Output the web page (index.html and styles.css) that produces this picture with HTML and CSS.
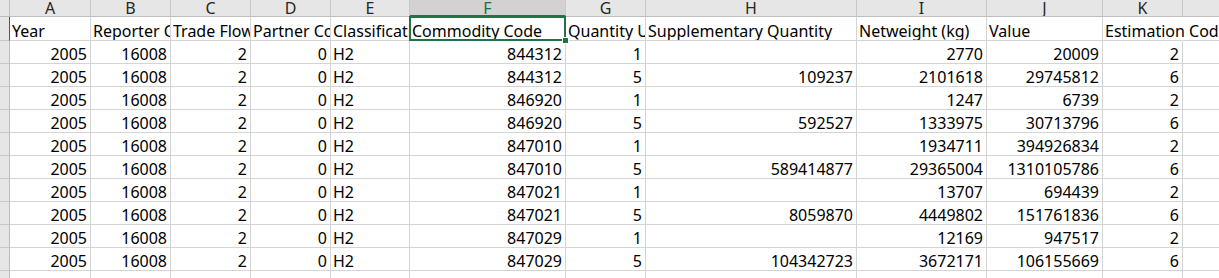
FILE: index.html
```html
<!DOCTYPE html>
<html>
<head>
<meta charset="utf-8">
<link rel="stylesheet" href="styles.css">
</head>
<body>
<div class="sheet">
  <div class="corner"></div>
  <div class="ch">A</div><div class="ch">B</div><div class="ch">C</div><div class="ch">D</div><div class="ch">E</div><div class="ch ch-sel">F</div><div class="ch">G</div><div class="ch">H</div><div class="ch">I</div><div class="ch">J</div><div class="ch">K</div><div class="ch ch-last"></div>

  <div class="rh rh-sel"><span class="rn">1</span></div>
  <div class="c">Year</div><div class="c">Reporter Code</div><div class="c">Trade Flow</div><div class="c">Partner Code</div><div class="c">Classification</div><div class="c active">Commodity Code<span class="handle"></span></div><div class="c">Quantity Unit</div><div class="c">Supplementary Quantity</div><div class="c">Netweight (kg)</div><div class="c">Value</div><div class="c spill">Estimation Code</div><div class="c last"></div>

  <div class="rh"><span class="rn">2</span></div>
  <div class="c n">2005</div><div class="c n">16008</div><div class="c n">2</div><div class="c n">0</div><div class="c">H2</div><div class="c n">844312</div><div class="c n">1</div><div class="c n"></div><div class="c n">2770</div><div class="c n">20009</div><div class="c n">2</div><div class="c last"></div>

  <div class="rh"><span class="rn">3</span></div>
  <div class="c n">2005</div><div class="c n">16008</div><div class="c n">2</div><div class="c n">0</div><div class="c">H2</div><div class="c n">844312</div><div class="c n">5</div><div class="c n">109237</div><div class="c n">2101618</div><div class="c n">29745812</div><div class="c n">6</div><div class="c last"></div>

  <div class="rh"><span class="rn">4</span></div>
  <div class="c n">2005</div><div class="c n">16008</div><div class="c n">2</div><div class="c n">0</div><div class="c">H2</div><div class="c n">846920</div><div class="c n">1</div><div class="c n"></div><div class="c n">1247</div><div class="c n">6739</div><div class="c n">2</div><div class="c last"></div>

  <div class="rh"><span class="rn">5</span></div>
  <div class="c n">2005</div><div class="c n">16008</div><div class="c n">2</div><div class="c n">0</div><div class="c">H2</div><div class="c n">846920</div><div class="c n">5</div><div class="c n">592527</div><div class="c n">1333975</div><div class="c n">30713796</div><div class="c n">6</div><div class="c last"></div>

  <div class="rh"><span class="rn">6</span></div>
  <div class="c n">2005</div><div class="c n">16008</div><div class="c n">2</div><div class="c n">0</div><div class="c">H2</div><div class="c n">847010</div><div class="c n">1</div><div class="c n"></div><div class="c n">1934711</div><div class="c n">394926834</div><div class="c n">2</div><div class="c last"></div>

  <div class="rh"><span class="rn">7</span></div>
  <div class="c n">2005</div><div class="c n">16008</div><div class="c n">2</div><div class="c n">0</div><div class="c">H2</div><div class="c n">847010</div><div class="c n">5</div><div class="c n">589414877</div><div class="c n">29365004</div><div class="c n">1310105786</div><div class="c n">6</div><div class="c last"></div>

  <div class="rh"><span class="rn">8</span></div>
  <div class="c n">2005</div><div class="c n">16008</div><div class="c n">2</div><div class="c n">0</div><div class="c">H2</div><div class="c n">847021</div><div class="c n">1</div><div class="c n"></div><div class="c n">13707</div><div class="c n">694439</div><div class="c n">2</div><div class="c last"></div>

  <div class="rh"><span class="rn">9</span></div>
  <div class="c n">2005</div><div class="c n">16008</div><div class="c n">2</div><div class="c n">0</div><div class="c">H2</div><div class="c n">847021</div><div class="c n">5</div><div class="c n">8059870</div><div class="c n">4449802</div><div class="c n">151761836</div><div class="c n">6</div><div class="c last"></div>

  <div class="rh"><span class="rn">10</span></div>
  <div class="c n">2005</div><div class="c n">16008</div><div class="c n">2</div><div class="c n">0</div><div class="c">H2</div><div class="c n">847029</div><div class="c n">1</div><div class="c n"></div><div class="c n">12169</div><div class="c n">947517</div><div class="c n">2</div><div class="c last"></div>

  <div class="rh"><span class="rn">11</span></div>
  <div class="c n">2005</div><div class="c n">16008</div><div class="c n">2</div><div class="c n">0</div><div class="c">H2</div><div class="c n">847029</div><div class="c n">5</div><div class="c n">104342723</div><div class="c n">3672171</div><div class="c n">106155669</div><div class="c n">6</div><div class="c last"></div>

  <div class="rh"><span class="rn">12</span></div>
  <div class="c n">2005</div><div class="c n">16008</div><div class="c n">2</div><div class="c n">0</div><div class="c">H2</div><div class="c n">847030</div><div class="c n">1</div><div class="c n"></div><div class="c n">28057</div><div class="c n">2766330</div><div class="c n">2</div><div class="c last"></div>
</div>
</body>
</html>
```

FILE: styles.css
```css
html, body {
  margin: 0;
  padding: 0;
  background: #ffffff;
}

body {
  width: 1219px;
  height: 278px;
  overflow: hidden;
  font-family: "Noto Sans", "Liberation Sans", sans-serif;
  font-size: 16px;
  color: #000000;
}

.sheet {
  display: grid;
  grid-template-columns: 10px 81px 80px 80px 80px 79px 156px 80px 211px 130px 116px 80px 1fr;
  grid-template-rows: 17px 24px;
  grid-auto-rows: 23px;
  width: 1219px;
}

.corner {
  background: #e6e6e6;
  border-right: 1px solid #bdbdbd;
  border-bottom: 1px solid #bdbdbd;
  box-sizing: border-box;
}

.ch {
  background: #e6e6e6;
  border-right: 1px solid #c8c8c8;
  border-bottom: 1px solid #bdbdbd;
  box-sizing: border-box;
  display: flex;
  align-items: center;
  justify-content: center;
  font-size: 16px;
  line-height: 16px;
  color: #262626;
  overflow: hidden;
}

.ch-sel {
  background: #d2d2d2;
  color: #1e6b41;
  border-bottom: 2px solid #217346;
}

.ch-last {
  border-right: none;
}

.rh {
  background: #e6e6e6;
  border-right: 1px solid #bdbdbd;
  border-bottom: 1px solid #c8c8c8;
  box-sizing: border-box;
  overflow: hidden;
  display: flex;
  align-items: center;
  justify-content: flex-end;
}

.rh-sel {
  border-right: 1px solid #217346;
}

.rn {
  flex: none;
  width: 32px;
  margin-right: -23px;
  text-align: center;
  font-size: 15px;
  line-height: 16px;
  color: #1f4e9a;
}

.c {
  border-right: 1px solid #d4d4d4;
  border-bottom: 1px solid #d4d4d4;
  box-sizing: border-box;
  display: flex;
  align-items: flex-end;
  padding: 0 3px 0 2px;
  line-height: 18px;
  white-space: nowrap;
  overflow: hidden;
  min-width: 0;
}

.n {
  justify-content: flex-end;
}

.spill {
  overflow: visible;
  border-right-color: transparent;
}

.last {
  border-right: none;
}

.active {
  position: relative;
  overflow: visible;
}

.active::before {
  content: "";
  position: absolute;
  left: -1px;
  top: -1px;
  right: -1px;
  bottom: -1px;
  border: 2px solid #217346;
  pointer-events: none;
}

.handle {
  position: absolute;
  right: -4px;
  bottom: -4px;
  width: 5px;
  height: 5px;
  background: #217346;
  border: 1px solid #ffffff;
  z-index: 2;
}
```
